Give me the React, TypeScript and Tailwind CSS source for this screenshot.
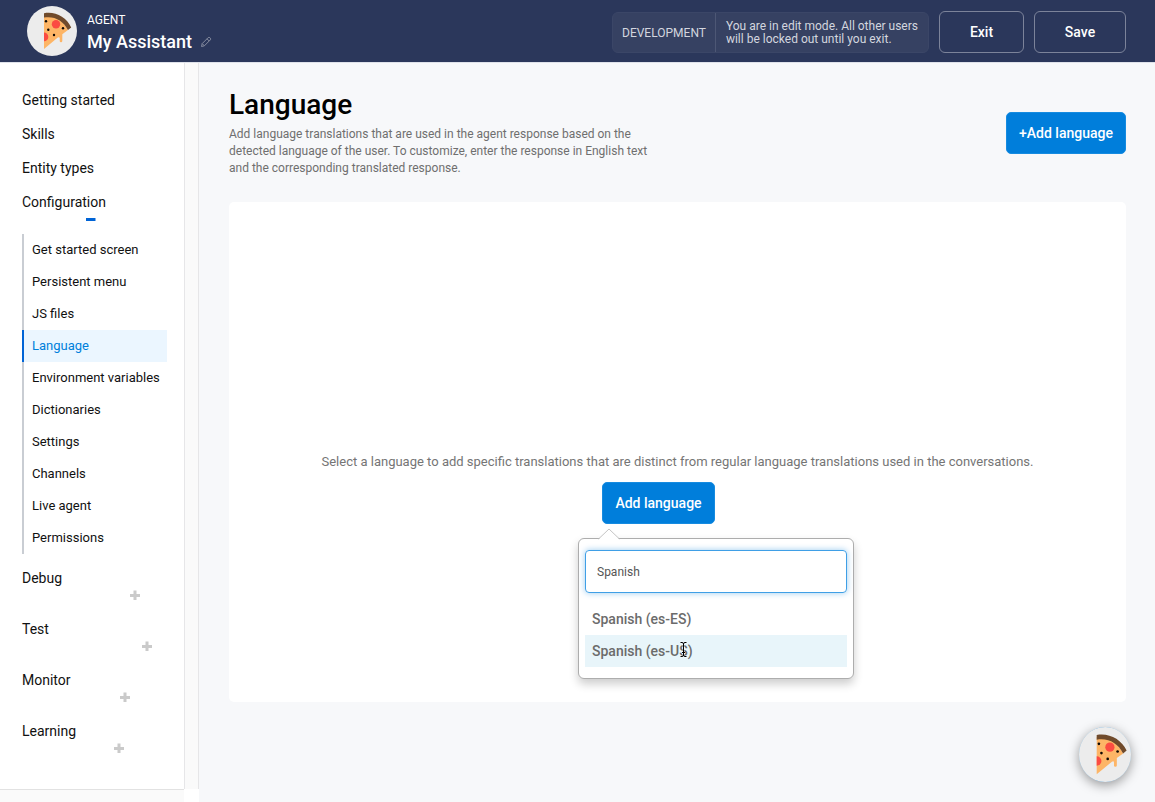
import { useState } from "react";

function PizzaAvatar({ className }: { className: string }) {
  return (
    <svg viewBox="0 0 50 50" className={className} aria-hidden="true">
      <circle cx="25" cy="25" r="25" fill="#ececec" />
      <path d="M17 9 C27 8 36 14 41 24 L35.3 28.2 V35 Q35.3 36.2 34 36.2 Q32.7 36.2 32.7 35 V32 Q32.4 30.6 30.8 31.6 L17 43 Z" fill="#fdb566" />
      <path d="M17 7.2 C28 5 39.5 11 44.2 21.4 L41 24 C36 14.5 27.5 9.8 17 11.6 Z" fill="#6f4a2b" />
      <circle cx="29" cy="18.3" r="4.2" fill="#fb4b42" />
      <path d="M17 26.6 A4.3 4.3 0 0 1 17 35.2 Z" fill="#fb4b42" />
      <g fill="#0d0804">
        <circle cx="19" cy="15.3" r="1.2" />
        <circle cx="21.3" cy="23.7" r="1.2" />
        <circle cx="27" cy="29" r="1.2" />
        <circle cx="36" cy="22.3" r="1.2" />
      </g>
    </svg>
  );
}

function PencilIcon() {
  return (
    <svg viewBox="0 0 12 12" className="size-3" fill="none" stroke="#858b9f" strokeWidth="1" strokeLinejoin="round" aria-hidden="true">
      <path d="M1.5 10.5 L2.2 7.6 L8.2 1.6 Q9 .9 9.8 1.6 L10.4 2.2 Q11.1 3 10.4 3.8 L4.4 9.8 Z M7 2.8 L9.2 5 M2.2 7.6 L4.4 9.8" />
    </svg>
  );
}

function ToggleIcon({ open }: { open?: boolean }) {
  return (
    <svg viewBox="0 0 10 10" className="size-2.5" aria-hidden="true">
      {open ? (
        <path d="M0 4h9.5v3H0z" fill="#0064d6" />
      ) : (
        <path d="M0 4h3.5V.5h3V4H10v3H6.500v3h-3V7H0z" fill="#cacaca" />
      )}
    </svg>
  );
}

const links = ["Getting started", "Skills", "Entity types"];

const configuration = [
  "Get started screen",
  "Persistent menu",
  "JS files",
  "Language",
  "Environment variables",
  "Dictionaries",
  "Settings",
  "Channels",
  "Live agent",
  "Permissions",
];

const groups = [
  { name: "Debug", indent: "pl-[108px]" },
  { name: "Test", indent: "pl-[120px]" },
  { name: "Monitor", indent: "pl-[98px]" },
  { name: "Learning", indent: "pl-[92px]" },
];

const languages = ["Spanish (es-ES)", "Spanish (es-US)"];

function Header() {
  return (
    <header className="flex h-[63px] items-center justify-between border-b border-[#dfe2ea] bg-[#2b375b] pr-[29px] pl-[27px] text-white">
      <div className="flex items-center gap-2.5">
        <PizzaAvatar className="size-[50px]" />
        <div className="pt-1.5">
          <p className="text-xs leading-4">AGENT</p>
          <div className="flex items-center gap-2">
            <h2 className="text-lg leading-7 font-medium">My Assistant</h2>
            <button type="button" aria-label="Rename agent">
              <PencilIcon />
            </button>
          </div>
        </div>
      </div>
      <div className="flex items-center gap-2.5 pt-0.5">
        <div className="flex h-[41px] items-stretch rounded-md border border-[#3b4667] bg-[#364162] text-[#d3d6df]">
          <span className="flex items-center border-r border-[#4d5775] px-[9px] pt-0.5 text-xs">DEVELOPMENT</span>
          <p className="self-center px-2.5 pt-0.5 text-xs leading-[13px]">
            You are in edit mode. All other users
            <br />
            will be locked out until you exit.
          </p>
        </div>
        <button type="button" className="h-[42px] w-[85px] rounded-md border border-[#7c839a] text-sm font-medium">
          Exit
        </button>
        <button type="button" className="h-[42px] w-[92px] rounded-md border border-[#7c839a] text-sm font-medium">
          Save
        </button>
      </div>
    </header>
  );
}

function Sidebar() {
  return (
    <aside className="flex w-[199px] shrink-0 flex-col">
      <div className="flex flex-1">
        <nav className="flex-1 pt-5 pr-[17px] pl-[22px] text-sm text-[#111]">
          {links.map((name) => (
            <a key={name} href="#" className="flex h-[34px] items-center">
              {name}
            </a>
          ))}
          <button type="button" className="block w-full pt-[5px] pb-2.5 text-left">
            <span className="block leading-6">Configuration</span>
            <span className="block pl-16">
              <ToggleIcon open />
            </span>
          </button>
          <ul className="mb-[7px] text-[13px]">
            {configuration.map((name) => (
              <li key={name}>
                <a
                  href="#"
                  className={
                    name === "Language"
                      ? "flex h-8 items-center border-l-2 border-[#0064d6] bg-[#ebf6ff] pl-2 text-[#0080db]"
                      : "flex h-8 items-center border-l-2 border-[#c9cdd3] pl-2 whitespace-nowrap"
                  }
                >
                  {name}
                </a>
              </li>
            ))}
          </ul>
          {groups.map((group) => (
            <button key={group.name} type="button" className="block w-full pt-[5px] pb-3 text-left">
              <span className="block leading-6">{group.name}</span>
              <span className={`block ${group.indent}`}>
                <ToggleIcon />
              </span>
            </button>
          ))}
        </nav>
        <div className="w-[15px] border-x border-[#e6e6e8] bg-[#fafafa]" />
      </div>
      <div className="mr-[15px] h-[13px] border-t border-[#e2e2e2] bg-[#fafafa]" />
    </aside>
  );
}

function LanguagePicker() {
  const [query, setQuery] = useState("Spanish");
  return (
    <div className="absolute top-14 -left-6 w-[276px] rounded-md border border-[#adadad] bg-white px-1.5 pt-[11px] pb-[11px] shadow-[0_5px_10px_rgba(0,0,0,0.2)]">
      <svg viewBox="0 0 22 12" className="absolute -top-[11px] left-[19px] h-3 w-[22px]" aria-hidden="true">
        <path d="M0 12 L11 1 L22 12 Z" fill="white" />
        <path d="M.5 11 L11 1 L21.500 11" fill="none" stroke="#c4c4c4" />
      </svg>
      <input
        type="text"
        aria-label="Search languages"
        value={query}
        onChange={(event) => setQuery(event.target.value)}
        className="block h-[43px] w-full rounded border border-[#3f9fe6] px-[11px] text-xs text-[#555] shadow-[0_0_6px_rgba(0,128,219,0.4)] outline-none"
      />
      <ul className="mt-2.5">
        {languages.map((name, index) => (
          <li key={name}>
            <button
              type="button"
              className={
                index === 1
                  ? "block h-8 w-full bg-[#e8f5fa] px-[7px] text-left text-sm font-medium text-[#6b6b6b]"
                  : "block h-8 w-full px-[7px] text-left text-sm font-medium text-[#6b6b6b]"
              }
            >
              {name}
            </button>
          </li>
        ))}
      </ul>
      <svg viewBox="0 0 9 17" className="absolute top-[102px] left-[100px] h-[17px] w-[9px]" fill="none" aria-hidden="true">
        <path
          d="M1.500 1.500h1.500q1.500 0 1.500 1.500q0-1.500 1.500-1.500h1.500M4.500 3v11M3 11.500h3M1.500 15.500h1.500q1.500 0 1.500-1.500q0 1.500 1.500 1.500h1.500"
          stroke="white"
          strokeOpacity="0.6"
          strokeWidth="2"
        />
        <path
          d="M1.500 1.500h1.500q1.500 0 1.500 1.500q0-1.500 1.500-1.500h1.500M4.500 3v11M3 11.500h3M1.500 15.500h1.500q1.500 0 1.500-1.500q0 1.500 1.500 1.500h1.500"
          stroke="black"
        />
      </svg>
    </div>
  );
}

export default function App() {
  return (
    <div className="flex min-h-screen flex-col bg-white font-[Roboto,'Liberation_Sans',sans-serif]">
      <Header />
      <div className="flex flex-1">
        <Sidebar />
        <main className="flex-1 bg-[#f7f8fa] pt-[25px] pr-[29px] pb-[100px] pl-[30px]">
          <div className="flex items-center justify-between">
            <div className="w-[430px]">
              <h1 className="text-[28px] leading-[34px] font-medium text-black">Language</h1>
              <p className="mt-1 text-xs leading-[17px] text-[#6f6f6f]">
                Add language translations that are used in the agent response based on the
                <br />
                detected language of the user. To customize, enter the response in English text
                <br />
                and the corresponding translated response.
              </p>
            </div>
            <button type="button" className="h-[42px] w-[120px] rounded-[5px] border border-[#168be0] bg-[#007edb] text-sm font-medium text-white">
              +Add language
            </button>
          </div>
          <section className="mt-[25px] flex h-[500px] flex-col items-center rounded-[5px] bg-white pt-[250px]">
            <p className="text-[13px] leading-5 text-[#757575]">
              Select a language to add specific translations that are distinct from regular language translations used in the conversations.
            </p>
            <div className="relative mt-2.5 mr-[38px]">
              <button type="button" className="h-[42px] w-[113px] rounded-[5px] border border-[#168be0] bg-[#007edb] text-sm font-medium text-white">
                Add language
              </button>
              <LanguagePicker />
            </div>
          </section>
        </main>
      </div>
      <button
        type="button"
        aria-label="Open chat"
        className="fixed right-6 bottom-5 flex h-[55px] w-[52px] items-center justify-center overflow-hidden rounded-[50%] bg-[#8fc1e6] shadow-[0_3px_12px_rgba(0,0,0,0.4)]"
      >
        <PizzaAvatar className="size-[55px] shrink-0" />
      </button>
    </div>
  );
}
